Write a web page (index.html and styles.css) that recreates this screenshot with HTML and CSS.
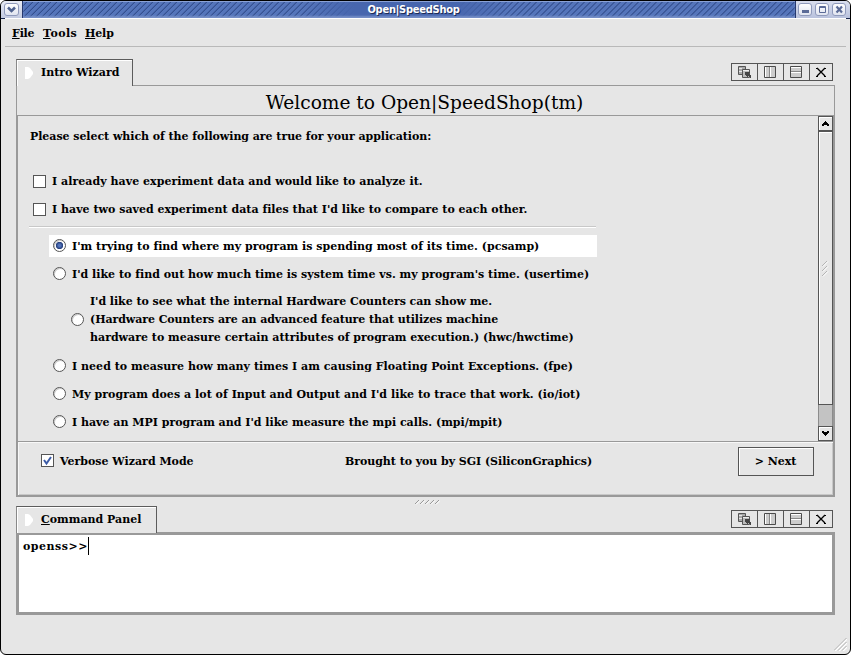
FILE: index.html
```html
<!DOCTYPE html>
<html lang="en">
<head>
<meta charset="utf-8">
<title>Open|SpeedShop</title>
<link rel="stylesheet" href="styles.css">
</head>
<body>
<svg class="defs" width="0" height="0">
  <defs>
    <linearGradient id="btn" x1="0" y1="0" x2="0" y2="1"><stop offset="0" stop-color="#fff"/><stop offset="1" stop-color="#dfe3ef"/></linearGradient>
    <symbol id="float" viewBox="0 0 26 18">
      <path d="M6.500 2.500h7v8h-7z" fill="#aaa" stroke="#555"/>
      <path d="M7 4.500h3M7 7.500h3" stroke="#e6e6e6"/>
      <path d="M10.500 5.500h7v8h-7z" fill="#bbb" stroke="#555"/>
      <path d="M11 6.500h6" stroke="#eee"/>
      <path d="M13 8h5v1h-1v1h1v1h1v3h-1v-1h-1v-1h-1v1h-1v-1h-1v-1h-1z" fill="#444"/>
    </symbol>
    <symbol id="vsplit" viewBox="0 0 26 18">
      <path d="M6.500 2.500h11v11h-11z" fill="#ccc" stroke="#4b4b4b"/>
      <path d="M7.500 3v10M12.500 3v10" stroke="#fff"/><path d="M11.500 3v10" stroke="#888"/>
    </symbol>
    <symbol id="hsplit" viewBox="0 0 26 18">
      <path d="M6.500 2.500h11v11h-11z" fill="#ccc" stroke="#4b4b4b"/>
      <path d="M7 3.500h10M7 8.500h10" stroke="#fff"/><path d="M7 7.500h10" stroke="#888"/>
    </symbol>
    <symbol id="close" viewBox="0 0 24 18">
      <path d="M7 4l8 8M15 4l-8 8" stroke="#000" stroke-width="1.300"/>
      <path d="M6 4.500h2M14 4.500h2M6 12.500h2M14 12.500h2" stroke="#000"/>
    </symbol>
  </defs>
</svg>
<div class="window">
  <header class="titlebar">
    <div class="menu-button"><svg width="22" height="17"><rect x="3.500" y="2.500" width="14" height="12" rx="2.500" fill="url(#btn)" stroke="#8f9abb"/><path d="M7 6.500l3.500 3.500L14 6.500" fill="none" stroke="#4f628f" stroke-width="2.500"/></svg></div>
    <div class="caption"><span>Open|SpeedShop</span></div>
    <div class="controls">
      <svg width="54" height="17">
        <g fill="url(#btn)" stroke="#8f9abb"><rect x="2.500" y="2.500" width="13" height="12" rx="2.500"/><rect x="19.500" y="2.500" width="13" height="12" rx="2.500"/><rect x="36.500" y="2.500" width="13" height="12" rx="2.500"/></g>
        <path d="M6 9h7v3H6z" fill="#5b6b97"/>
        <path d="M23.500 5.500h6v6h-6zM23 6.500h7" fill="none" stroke="#5b6b97"/>
        <path d="M40.500 5.500l5.500 6M46 5.500l-5.500 6" stroke="#5b6b97" stroke-width="2.200"/>
      </svg>
    </div>
  </header>
  <nav class="menubar"><span class="file"><u>F</u>ile</span><span class="tools"><u>T</u>ools</span><span class="help"><u>H</u>elp</span></nav>
  <main class="workspace">
    <section>
      <div class="tabrow">
        <div class="tab"><svg width="8" height="12"><path d="M0 0h3l2 1 3 4v2l-3 4-2 1H0z" fill="#fff"/></svg><span>Intro Wizard</span></div>
        <div class="tools-row"><svg viewBox="0 0 25 16"><use href="#float" width="26" height="18"/></svg><svg viewBox="0 0 25 16"><use href="#vsplit" width="26" height="18"/></svg><svg viewBox="0 0 25 16"><use href="#hsplit" width="26" height="18"/></svg><svg class="last" viewBox="0 0 22 16"><use href="#close" width="24" height="18"/></svg></div>
      </div>
      <h1 class="heading"><span>Welcome to Open|SpeedShop(tm)</span></h1>
      <div class="wizard">
        <div class="scroll">
          <div class="questions">
            <p class="lead">Please select which of the following are true for your application:</p>
            <label class="check"><i class="box"></i><span class="q1">I already have experiment data and would like to analyze it.</span></label>
            <label class="check"><i class="box"></i><span class="q3">I have two saved experiment data files that I'd like to compare to each other.</span></label>
            <div class="rule"></div>
            <label class="option selected"><i class="radio on"></i><span class="q3">I'm trying to find where my program is spending most of its time. (pcsamp)</span></label>
            <label class="option"><i class="radio"></i><span class="q3">I'd like to find out how much time is system time vs. my program's time. (usertime)</span></label>
            <label class="option tall"><i class="radio"></i><span><span class="h1">I'd like to see what the internal Hardware Counters can show me.</span><br><span class="h2">(Hardware Counters are an advanced feature that utilizes machine</span><br>hardware to measure certain attributes of program execution.) (hwc/hwctime)</span></label>
            <label class="option"><i class="radio"></i><span class="q2">I need to measure how many times I am causing Floating Point Exceptions. (fpe)</span></label>
            <label class="option"><i class="radio"></i><span class="q1">My program does a lot of Input and Output and I'd like to trace that work. (io/iot)</span></label>
            <label class="option"><i class="radio"></i><span>I have an MPI program and I'd like measure the mpi calls. (mpi/mpit)</span></label>
          </div>
          <div class="scrollbar">
            <div class="arrow"><svg width="13" height="13"><path d="M6 4h1v1h1v1h1v1h1v2H8V8H5v1H3V7h1V6h1V5h1z"/></svg></div>
            <div class="thumb"><svg width="12" height="20"><path d="M3 8l5-5M3 13l5-5M3 18l5-5" stroke="#b4b4b4"/><path d="M4 8.500l5-5M4 13.500l5-5M4 18.500l5-5" stroke="#fff"/></svg></div>
            <div class="trough"></div>
            <div class="arrow"><svg width="13" height="13"><path d="M3 4h2v1h3V4h2v2H9v1H8v1H7v1H6V8H5V7H4V6H3z"/></svg></div>
          </div>
        </div>
        <footer class="bottom">
          <label class="verbose"><i class="box"><svg width="11" height="11"><path d="M2 5l2.500 3.500L9 2" fill="none" stroke="#3c5ba6" stroke-width="2"/></svg></i><span>Verbose Wizard Mode</span></label>
          <span class="credit">Brought to you by SGI (SiliconGraphics)</span>
          <button class="next">&gt; Next</button>
        </footer>
      </div>
    </section>
    <div class="splitter"><svg width="26" height="6"><path d="M1 5l4-4M6 5l4-4M11 5l4-4M16 5l4-4M21 5l4-4" stroke="#999"/><path d="M2 5.500l4-4M7 5.500l4-4M12 5.500l4-4M17 5.500l4-4M22 5.500l4-4" stroke="#fff"/></svg></div>
    <section>
      <div class="tabrow">
        <div class="tab wide"><svg width="8" height="12"><path d="M0 0h3l2 1 3 4v2l-3 4-2 1H0z" fill="#fff"/></svg><span><u>C</u>ommand Panel</span></div>
        <div class="tools-row"><svg viewBox="0 0 25 16"><use href="#float" width="26" height="18"/></svg><svg viewBox="0 0 25 16"><use href="#vsplit" width="26" height="18"/></svg><svg viewBox="0 0 25 16"><use href="#hsplit" width="26" height="18"/></svg><svg class="last" viewBox="0 0 22 16"><use href="#close" width="24" height="18"/></svg></div>
      </div>
      <div class="console"><span>openss&gt;&gt;</span><i class="caret"></i></div>
    </section>
  </main>
  <svg class="grip" width="13" height="13"><path d="M1 13L13 1M5 13l8-8M9 13l4-4" stroke="#fff" stroke-width="1.500"/><path d="M0 12.500L12.500 0M4 12.500l8.500-8.500M8 12.500l4.500-4.500" stroke="#b0b0b0"/></svg>
</div>
</body>
</html>
```
FILE: styles.css
```css
* { box-sizing: border-box; }
body { margin: 0; background: #fff; font: bold 11px/18px "DejaVu Serif", serif; color: #000; }
.defs { position: absolute; }
svg { display: block; }
p, h1 { margin: 0; }
u { text-decoration: underline 1px; text-underline-offset: 1px; text-decoration-skip-ink: none; }
.window { position: relative; width: 851px; height: 655px; border: 1px solid #000; border-radius: 6px; background: #e6e6e6; overflow: hidden; display: flex; flex-direction: column; }

.titlebar { display: flex; height: 18px; border-bottom: 1px solid #16244c; flex: none; }
.menu-button { width: 22px; background: linear-gradient(#e9ecf6, #c3cae0); border-right: 1px solid #26396f; }
.controls { width: 55px; background: linear-gradient(#d9deee, #b9c2dd); border-left: 1px solid #26396f; }
.caption { flex: 1; display: flex; justify-content: center; position: relative;
  background: linear-gradient(90deg, transparent 36%, #4766ae 43%, #4766ae 56%, transparent 63%), repeating-linear-gradient(135deg, #5575bb 0 2px, #5575bb 2.600px, #2c4684 3.400px, #5575bb 4.240px); box-shadow: inset 0 1px #8ba2d5, inset 0 -2px 2px #7890c8; }
.caption span { font: bold 11px/18px "DejaVu Sans Condensed", sans-serif; letter-spacing: -.25px; color: #fff; text-shadow: 1px 1px #1c2b55; padding-left: 9px; }

.menubar { height: 28px; border-bottom: 1px solid #b9b9b9; margin: 0 4px; padding: 6px 0 0 7px; display: flex; flex: none; box-shadow: 0 -1px #fff; }
.file { width: 31px; letter-spacing: -.2px; }
.tools { width: 42px; letter-spacing: .45px; }
.help { letter-spacing: -.15px; }

.workspace { padding: 12px 15px 0; }
.tabrow { display: flex; justify-content: space-between; height: 26px; position: relative; }
.tab { width: 117px; height: 27px; border: 1px solid #5c5c5c; border-left-color: #888; border-bottom: 0; box-shadow: inset 1px 1px #fff; background: #e6e6e6; display: flex; align-items: center; gap: 8px; padding: 0 0 1px 8px; white-space: nowrap; z-index: 1; }
.tab.wide { width: 141px; }
.tools-row { display: flex; height: 18px; margin: 4px 2px 0 0; border: 1px solid #555; }
.tools-row svg { width: 26px; height: 16px; border-right: 1px solid #555; }
.tools-row .last { width: 22px; border: 0; }
.heading { height: 30px; border: 1px solid #999; border-bottom: 0; width: 819px; text-align: center; font: normal 18.600px/33px "DejaVu Serif", serif; }
.heading span { position: relative; left: -1px; }
.wizard { width: 819px; height: 382px; border: solid #999; border-width: 1px 2px 2px; }
.scroll { display: flex; height: 326px; border-bottom: 1px solid #999; }
.questions { flex: 1; padding: 12px 0 0 12px; white-space: nowrap; }
.lead { height: 40px; letter-spacing: -.046px; }
.check { display: flex; align-items: center; height: 28px; padding-left: 3px; gap: 6px; }
.box { width: 13px; height: 13px; border: 1px solid #555; background: #fff; flex: none; margin-bottom: 2px; }
.rule { width: 567px; height: 2px; margin: 2px 0 0 -1px; background: #c8c8c8; border-bottom: 1px solid #fff; }
.option { display: flex; align-items: center; width: 548px; height: 22px; margin: 0 0 6px 19px; padding: 1px 0 0 4px; gap: 6px; }
.rule + .option { margin-top: 7px; }
.option.selected { background: #fff; }
.tall { height: 58px; padding: 0 0 0 22px; }
.q1 { letter-spacing: .04px; }
.q2 { letter-spacing: .035px; }
.q3 { letter-spacing: .015px; }
.h1 { letter-spacing: -.045px; }
.h2 { letter-spacing: -.075px; }
.radio { width: 13px; height: 13px; border: 1px solid #555; border-radius: 50%; background: #fff; flex: none; box-shadow: inset 1px 1px #ccc; margin-bottom: 2px; }
.radio.on { background: radial-gradient(circle at 5.500px 5.500px, #5577be 0 1px, #2c4684 3px, #2c4684 3.400px, #fff 4px); }

.scrollbar { width: 15px; display: flex; flex-direction: column; background: #555; }
.arrow { height: 15px; border: 1px solid #555; background: #e6e6e6; box-shadow: inset 1px 1px #fff; }
.thumb { height: 274px; border: 1px solid #555; background: #e6e6e6; box-shadow: inset 1px 1px #fff; display: flex; align-items: center; }
.trough { flex: 1; background: #c3c3c3; border: solid #8c8c8c; border-width: 0 1px; }

.bottom { height: 53px; display: flex; align-items: flex-start; box-shadow: inset 1px 1px #f8f8f8, inset -1px -1px #c8c8c8; padding: 5px 19px 0 23px; }
.verbose { display: flex; align-items: center; gap: 6px; width: 304px; height: 29px; }
.credit { width: 393px; padding-top: 6px; letter-spacing: -.05px; }
.next { width: 76px; height: 29px; margin: 0; padding: 0 1px 0 0; border: 1px solid #555; background: #e6e6e6; box-shadow: inset 1px 1px #fff; font: inherit; color: #000; }

.splitter { height: 9px; display: flex; justify-content: center; padding: 2px 0 0 2px; }
.console { width: 819px; height: 83px; border: 3px solid #999; background: #fff; padding: 1px 0 0 4px; display: flex; letter-spacing: .5px; line-height: 22px; }
.caret { width: 1px; height: 18px; background: #000; margin-top: 1px; }
.grip { position: absolute; right: 3px; bottom: 3px; }
```
